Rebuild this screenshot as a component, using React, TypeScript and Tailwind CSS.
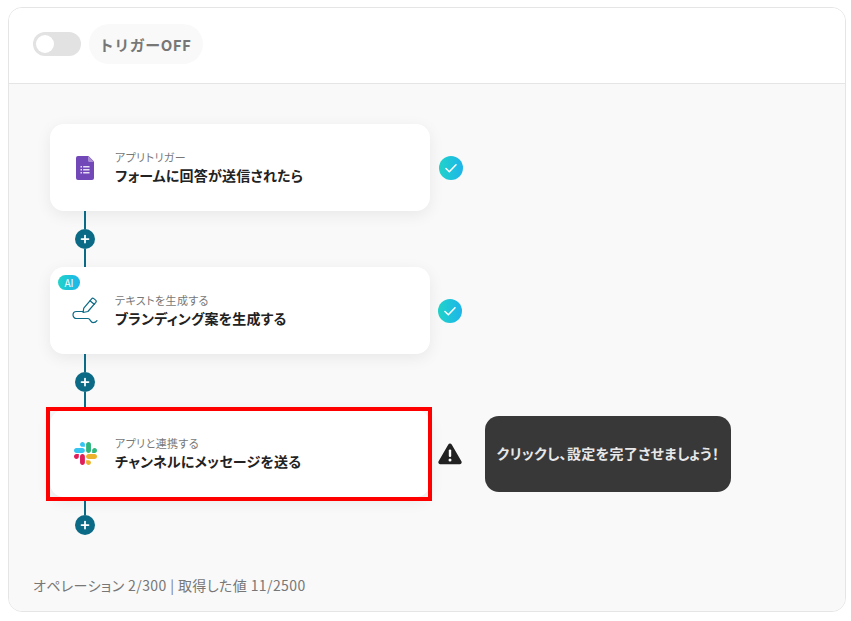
import React from 'react';
import { Plus } from 'lucide-react';

const FormsIcon = () => (
  <svg width="18" height="24" viewBox="0 0 18 24">
    <path d="M2 0h10.5L18 5.5V22a2 2 0 0 1-2 2H2a2 2 0 0 1-2-2V2a2 2 0 0 1 2-2z" fill="#7248b9" />
    <path d="M12 0l6 6h-4.5A1.5 1.5 0 0 1 12 4.5z" fill="#a98bd6" />
    <path d="M4.5 10h1.5v1.5H4.5zM4.5 13h1.5v1.5H4.5zM4.5 16h1.5v1.5H4.5zM7.2 10h6.3v1.5H7.2zM7.2 13h6.3v1.5H7.2zM7.2 16h6.3v1.5H7.2z" fill="#e6def3" />
  </svg>
);

const PenIcon = () => (
  <svg width="26" height="28" viewBox="0 0 26 28" fill="none" stroke="#0b6a85" strokeWidth="1.2" strokeLinecap="round" strokeLinejoin="round">
    <path d="M11 15.500l.8-4.300L19.600 1.800a1.600 1.600 0 0 1 2.200-.2l1.800 1.500a1.600 1.600 0 0 1 .2 2.200L15.900 14.500z" />
    <path d="M18 3.800l4.200 3.500" />
    <path d="M11 14.500H4.500a3.500 3.500 0 0 0 0 7H16c2.500 0 2.500 4.200 5 4.200 1.500 0 3-.5 4-2" />
  </svg>
);

const SlackIcon = () => (
  <svg width="23" height="23" viewBox="0 0 122.8 122.8">
    <path d="M25.8 77.6c0 7.1-5.8 12.9-12.9 12.9S0 84.7 0 77.6s5.8-12.9 12.9-12.9h12.900v12.900z" fill="#E01E5A" />
    <path d="M32.300 77.600c0-7.100 5.800-12.900 12.900-12.900s12.900 5.800 12.900 12.900v32.300c0 7.100-5.800 12.900-12.900 12.900s-12.900-5.800-12.900-12.900V77.600z" fill="#E01E5A" />
    <path d="M45.200 25.800c-7.100 0-12.900-5.800-12.900-12.900S38.100 0 45.200 0s12.900 5.800 12.900 12.900v12.900H45.200z" fill="#36C5F0" />
    <path d="M45.200 32.300c7.100 0 12.900 5.800 12.900 12.900s-5.800 12.900-12.900 12.900H12.900C5.800 58.100 0 52.300 0 45.200s5.800-12.900 12.900-12.900h32.300z" fill="#36C5F0" />
    <path d="M97 45.200c0-7.100 5.800-12.900 12.900-12.900s12.900 5.800 12.900 12.900-5.800 12.900-12.900 12.900H97V45.200z" fill="#2EB67D" />
    <path d="M90.500 45.200c0 7.100-5.800 12.900-12.900 12.900s-12.900-5.800-12.900-12.900V12.900C64.700 5.800 70.500 0 77.600 0s12.900 5.800 12.900 12.900v32.300z" fill="#2EB67D" />
    <path d="M77.600 97c7.100 0 12.900 5.800 12.900 12.900s-5.800 12.900-12.900 12.900-12.900-5.800-12.900-12.900V97h12.900z" fill="#ECB22E" />
    <path d="M77.600 90.500c-7.100 0-12.900-5.800-12.900-12.900s5.800-12.900 12.900-12.900h32.300c7.100 0 12.900 5.800 12.900 12.900s-5.800 12.900-12.900 12.900H77.600z" fill="#ECB22E" />
  </svg>
);

const CheckBadge = () => (
  <div className="w-6 h-6 rounded-full flex items-center justify-center bg-gradient-to-r from-[#22d3c8] to-[#1fb4ea]">
    <svg width="14" height="14" viewBox="0 0 14 14" fill="none" stroke="#fff" strokeWidth="1.6" strokeLinecap="round" strokeLinejoin="round">
      <path d="M2 7.500l3.300 3.200L12 3.800" />
    </svg>
  </div>
);

const WarnIcon = () => (
  <svg width="24" height="22" viewBox="0 0 24 22">
    <path d="M10.300 1.500a2 2 0 0 1 3.400 0l9.700 16.800a2 2 0 0 1-1.700 3H2.300a2 2 0 0 1-1.700-3z" fill="#222" />
    <rect x="10.800" y="6.500" width="2.400" height="7.500" rx="1" fill="#fff" />
    <circle cx="12" cy="17" r="1.500" fill="#fff" />
  </svg>
);

const Connector = ({ last }: { last?: boolean }) => (
  <div className={`relative w-[20px] ml-[25px] flex flex-col items-center ${last ? 'h-[38px]' : 'h-[56px]'}`}>
    <div className="w-[2px] h-[18px] bg-[#0b6a85]" />
    <div className="w-5 h-5 rounded-full bg-[#0b6a85] flex items-center justify-center shrink-0">
      <Plus size={12} color="#fff" strokeWidth={3.5} />
    </div>
    {!last && <div className="w-[2px] flex-1 bg-[#0b6a85]" />}
  </div>
);

const FlowCard = ({ icon, sub, title, ai }: { icon: React.ReactNode; sub: string; title: string; ai?: boolean }) => (
  <div className="relative w-[380px] h-[87px] bg-white rounded-[14px] shadow-[0_4px_16px_rgba(0,0,0,0.07)] flex items-center shrink-0">
    {ai && (
      <span className="absolute left-[8px] top-[8px] w-[22px] h-[15px] rounded-full bg-gradient-to-r from-[#22d3c8] to-[#1fb4ea] text-white text-[10px] leading-[15px] text-center">
        AI
      </span>
    )}
    <div className="w-[65px] flex justify-center pl-[5px] shrink-0">{icon}</div>
    <div className="[font-feature-settings:'palt']">
      <div className="text-[11px] leading-[16px] tracking-[0.4px] text-[#777]">{sub}</div>
      <div className="-mt-px text-[14px] leading-[22px] tracking-[0.2px] font-bold text-[#222]">{title}</div>
    </div>
  </div>
);

export default function App() {
  return (
    <div className="w-[851px] h-[621px] bg-white pl-[8px] pt-[7px] font-['Noto_Sans_CJK_JP','Noto_Sans',sans-serif]">
      <div className="w-[838px] h-[605px] border border-[#e5e5e5] rounded-[14px] overflow-hidden flex flex-col">
        {/* Trigger header */}
        <div className="h-[76px] shrink-0 border-b border-[#e5e5e5] bg-white flex items-center gap-[8px] pl-[24px] pb-[3px]">
          <div className="w-[48px] h-[24px] rounded-full bg-[#e2e2e2] flex items-center pl-[3px]">
            <div className="w-[18px] h-[18px] rounded-full bg-white" />
          </div>
          <div className="h-[40px] w-[114px] rounded-full bg-[#f9f9f9] flex items-center justify-center pt-[2px] pr-[2px] text-[15px] tracking-[0.5px] font-bold text-[#777]">
            トリガーOFF
          </div>
        </div>

        {/* Flow */}
        <div className="flex-1 bg-[#f9f9f9] flex flex-col pl-[41px] pt-[40px]">
          <div className="flex items-center gap-[9px]">
            <FlowCard icon={<FormsIcon />} sub="アプリトリガー" title="フォームに回答が送信されたら" />
            <CheckBadge />
          </div>
          <Connector />
          <div className="flex items-center gap-[8px]">
            <FlowCard icon={<PenIcon />} sub="テキストを生成する" title="ブランディング案を生成する" ai />
            <CheckBadge />
          </div>
          <Connector />
          <div className="flex items-center">
            <FlowCard icon={<SlackIcon />} sub="アプリと連携する" title="チャンネルにメッセージを送る" />
            <div className="ml-[8px] w-[24px]">
              <WarnIcon />
            </div>
            <div className="ml-[23px] w-[246px] h-[76px] rounded-[14px] bg-[#383838] flex items-center justify-center text-[14px] tracking-[0.35px] font-bold text-[#e8e8e8] [font-feature-settings:'palt']">
              クリックし、設定を完了させましょう！
            </div>
          </div>
          <Connector last />
          <div className="-ml-[17px] mt-[40px] text-[14px] leading-[20px] text-[#777] tracking-[0.4px] [font-feature-settings:'palt']">オペレーション 2/300 | 取得した値 11/2500</div>
        </div>
      </div>
      {/* Red highlight over the third step */}
      <div className="absolute left-[46px] top-[407px] w-[386px] h-[94px] border-4 border-[#f00] pointer-events-none" />
    </div>
  );
}
